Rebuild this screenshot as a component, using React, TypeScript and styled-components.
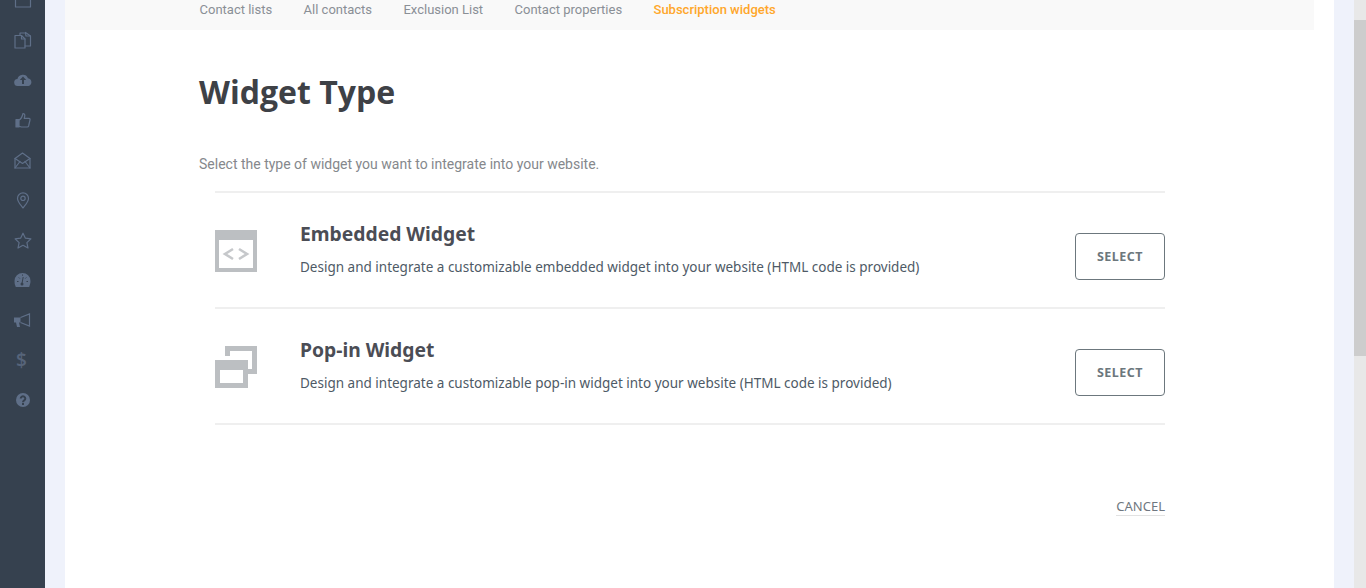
import React from "react";
import styled, { createGlobalStyle } from "styled-components";

const GlobalStyle = createGlobalStyle`
  html, body {
    margin: 0;
    padding: 0;
    height: 100%;
    overflow: hidden;
    background: #eff2fb;
  }
`;

const Page = styled.div`
  display: flex;
  width: 1366px;
  height: 588px;
  overflow: hidden;
  background: #eff2fb;
`;

const Sidebar = styled.nav`
  flex: 0 0 45px;
  display: flex;
  flex-direction: column;
  align-items: center;
  margin-top: -20px;
  height: 608px;
  background: #36414f;
  color: #5f6f88;
`;

const NavIcon = styled.div`
  flex: 0 0 40px;
  display: flex;
  align-items: center;
  justify-content: center;
  width: 45px;
  svg {
    display: block;
  }
`;

const Dollar = styled.span`
  font-family: "Open Sans", sans-serif;
  font-size: 19px;
  font-weight: 600;
  line-height: 20px;
  margin-left: -2px;
  color: #56647a;
`;

const Main = styled.main`
  flex: 0 0 1269px;
  margin-left: 20px;
  background: #fff;
`;

const TabBar = styled.div`
  display: flex;
  gap: 31.4px;
  box-sizing: border-box;
  width: 1249px;
  height: 30px;
  padding: 1px 0 0 134.5px;
  background: #f9f9f9;
  font-family: Roboto, sans-serif;
  font-size: 13px;
  line-height: 18px;
`;

const Tab = styled.a<{ $active?: boolean }>`
  color: ${(p) => (p.$active ? "#ffa72b" : "#8a8f96")};
  font-weight: ${(p) => (p.$active ? 500 : 400)};
`;

const Content = styled.div`
  padding: 40px 169px 0 134px;
`;

const Title = styled.h1`
  margin: 0;
  font-family: "Open Sans", sans-serif;
  font-size: 32px;
  line-height: 44px;
  font-weight: 700;
  color: #3e4146;
`;

const Lead = styled.p`
  margin: 40px 0 17px;
  font-family: Roboto, sans-serif;
  font-size: 14px;
  line-height: 20px;
  color: #85888c;
`;

const List = styled.div`
  margin-left: 16px;
  border-top: 2px solid #efefef;
`;

const Row = styled.div`
  display: flex;
  align-items: center;
  height: 114px;
  border-bottom: 2px solid #efefef;
`;

const WidgetIcon = styled.div`
  flex: 0 0 85px;
  height: 42px;
  margin-top: 2px;
  color: #bcbfc2;
  svg {
    display: block;
  }
`;

const Info = styled.div`
  flex: 1;
  margin-top: -2px;
`;

const RowTitle = styled.h2`
  margin: 0 0 10px;
  font-family: "Noto Sans", sans-serif;
  font-size: 19.3px;
  line-height: 26px;
  font-weight: 700;
  color: #4b4d55;
`;

const RowText = styled.p`
  margin: 0;
  font-family: "Noto Sans", sans-serif;
  font-size: 13.5px;
  line-height: 20px;
  color: #4e5a66;
`;

const SelectButton = styled.button`
  width: 90px;
  height: 47px;
  margin-top: 13px;
  padding: 0;
  border: 1px solid #6c777d;
  border-radius: 4px;
  background: #fff;
  font-family: "Noto Sans", sans-serif;
  font-size: 12.5px;
  font-weight: 700;
  letter-spacing: 0.5px;
  color: #6c777d;
`;

const Footer = styled.div`
  display: flex;
  justify-content: flex-end;
  margin-top: 72px;
`;

const CancelLink = styled.a`
  border-bottom: 1px solid #e2e2e2;
  font-family: "Noto Sans", sans-serif;
  font-size: 13px;
  line-height: 18px;
  color: #6f7780;
`;

const Gutter = styled.div`
  flex: 0 0 20px;
`;

const Scrollbar = styled.div`
  flex: 0 0 12px;
  display: flex;
  flex-direction: column;
  background: #e8e8e8;
`;

const ScrollThumb = styled.div`
  height: 336px;
  margin-top: 20px;
  background: #cdcdcd;
`;

const stroke = {
  fill: "none",
  stroke: "currentColor",
  strokeWidth: 1.2,
  strokeLinejoin: "round" as const,
  strokeLinecap: "round" as const,
};

const navIcons = [
  <svg width="18" height="18" viewBox="0 0 18 18" {...stroke}>
    <rect x="1.500" y="2" width="15" height="14" />
    <path d="M1.500 5h15" />
  </svg>,
  <svg width="18" height="18" viewBox="0 0 18 18" {...stroke}>
    <path d="M1 4.500h6.500L11 8v9H1z" />
    <path d="M7.500 4.500V8H11" />
    <path d="M6 4.500V2h5.500L12 5h4.500v10H11" />
    <path d="M11.500 1.500l5 3.500" />
  </svg>,
  <svg width="18" height="14" viewBox="0 0 18 14">
    <path
      fill="currentColor"
      d="M4 13a3.500 3.500 0 0 1-.6-7A5.600 5.600 0 0 1 14 5.200 4 4 0 0 1 14.500 13z"
    />
    <path fill="#36414f" d="M9 3.600 12.200 7H10v4H8V7H5.800z" />
  </svg>,
  <svg width="16" height="16" viewBox="0 0 16 16" {...stroke}>
    <path d="M1 7.500h3v7.500H1z" fill="currentColor" />
    <path d="M4 8c2-1 3.200-3 4-6.500 1.600 0 2.200 1.400 1.600 3.300L9.200 6.400H14c.9 0 1.200.8 1 1.600l-1.400 6c-.2.7-.6 1-1.300 1H6.500L4 14.200" />
  </svg>,
  <svg width="17" height="17" viewBox="0 0 17 17" {...stroke}>
    <path d="M1 6.500 8.500 1 16 6.500V16H1z" />
    <path d="M1 6.500 8.500 11.500 16 6.500" />
    <path d="M1 16 6 9.500M16 16 11 9.500" />
  </svg>,
  <svg width="14" height="17" viewBox="0 0 14 17" {...stroke}>
    <path d="M7 16C4 12 1.500 9.500 1.500 6.400a5.500 5.500 0 0 1 11 0C12.500 9.500 10 12 7 16z" />
    <circle cx="7" cy="6.300" r="2.200" />
  </svg>,
  <svg width="18" height="17" viewBox="0 0 18 17" {...stroke}>
    <path d="M9 1.200 11.400 6.200 16.900 6.900 12.900 10.600 14 16 9 13.300 4 16 5.100 10.600 1.100 6.900 6.600 6.200z" />
  </svg>,
  <svg width="17" height="15" viewBox="0 0 17 15">
    <path
      fill="currentColor"
      d="M8.500 0a8 8 0 0 1 8 8c0 1.900-.5 3.500-1.300 6H1.800A11 11 0 0 1 .500 8a8 8 0 0 1 8-8z"
    />
    <path
      stroke="#36414f"
      strokeWidth="1"
      fill="none"
      d="M8 10.500 9.200 4M3 8.500h1.500M12.500 8.500h1.500M4.800 4.500l1 1M12.300 4.500l-1 1M8.500 1.500v1.200"
    />
    <circle cx="8" cy="11" r="1.500" fill="#36414f" />
  </svg>,
  <svg width="17" height="15" viewBox="0 0 17 15">
    <path fill="currentColor" d="M0 4.500h6.500v5H5l1 4.500H3L2 9.500H0z" />
    <path
      fill="none"
      stroke="currentColor"
      strokeWidth="1.200"
      d="M6.500 4.500 15.500 1v12l-9-3.500"
    />
  </svg>,
  <Dollar>$</Dollar>,
  <svg width="14" height="14" viewBox="0 0 14 14">
    <circle cx="7" cy="7" r="7" fill="currentColor" />
    <path
      fill="none"
      stroke="#36414f"
      strokeWidth="2"
      d="M4.700 5.500a2.300 2.200 0 1 1 3.500 1.900C7.300 8 7 8.300 7 9.200"
    />
    <rect x="6" y="10" width="2" height="2" fill="#36414f" />
  </svg>,
];

const EmbedIcon = () => (
  <svg width="42" height="42" viewBox="0 0 42 42">
    <path
      fill="currentColor"
      fillRule="evenodd"
      d="M0 0h42v42H0zM4 10v28h34V10z"
    />
    <path
      fill="none"
      stroke="#c6c8cb"
      strokeWidth="2.600"
      d="M18 19l-8 5 8 5M24 19l8 5-8 5"
    />
  </svg>
);

const PopinIcon = () => (
  <svg width="42" height="42" viewBox="0 0 42 42">
    <path
      fill="currentColor"
      fillRule="evenodd"
      d="M10 0h32v28h-9v-5h4V5H15v5h-5zM0 14h33v28H0zM5 24v13h23V24z"
    />
  </svg>
);

const widgets = [
  {
    title: "Embedded Widget",
    text: "Design and integrate a customizable embedded widget into your website (HTML code is provided)",
    icon: <EmbedIcon />,
  },
  {
    title: "Pop-in Widget",
    text: "Design and integrate a customizable pop-in widget into your website (HTML code is provided)",
    icon: <PopinIcon />,
  },
];

const tabs = ["Contact lists", "All contacts", "Exclusion List", "Contact properties"];

export default function App() {
  return (
    <Page>
      <GlobalStyle />
      <Sidebar>
        {navIcons.map((icon, i) => (
          <NavIcon key={i}>{icon}</NavIcon>
        ))}
      </Sidebar>
      <Main>
        <TabBar>
          {tabs.map((t) => (
            <Tab key={t}>{t}</Tab>
          ))}
          <Tab $active>Subscription widgets</Tab>
        </TabBar>
        <Content>
          <Title>Widget Type</Title>
          <Lead>Select the type of widget you want to integrate into your website.</Lead>
          <List>
            {widgets.map((w) => (
              <Row key={w.title}>
                <WidgetIcon>{w.icon}</WidgetIcon>
                <Info>
                  <RowTitle>{w.title}</RowTitle>
                  <RowText>{w.text}</RowText>
                </Info>
                <SelectButton>SELECT</SelectButton>
              </Row>
            ))}
          </List>
          <Footer>
            <CancelLink>CANCEL</CancelLink>
          </Footer>
        </Content>
      </Main>
      <Gutter />
      <Scrollbar>
        <ScrollThumb />
      </Scrollbar>
    </Page>
  );
}
